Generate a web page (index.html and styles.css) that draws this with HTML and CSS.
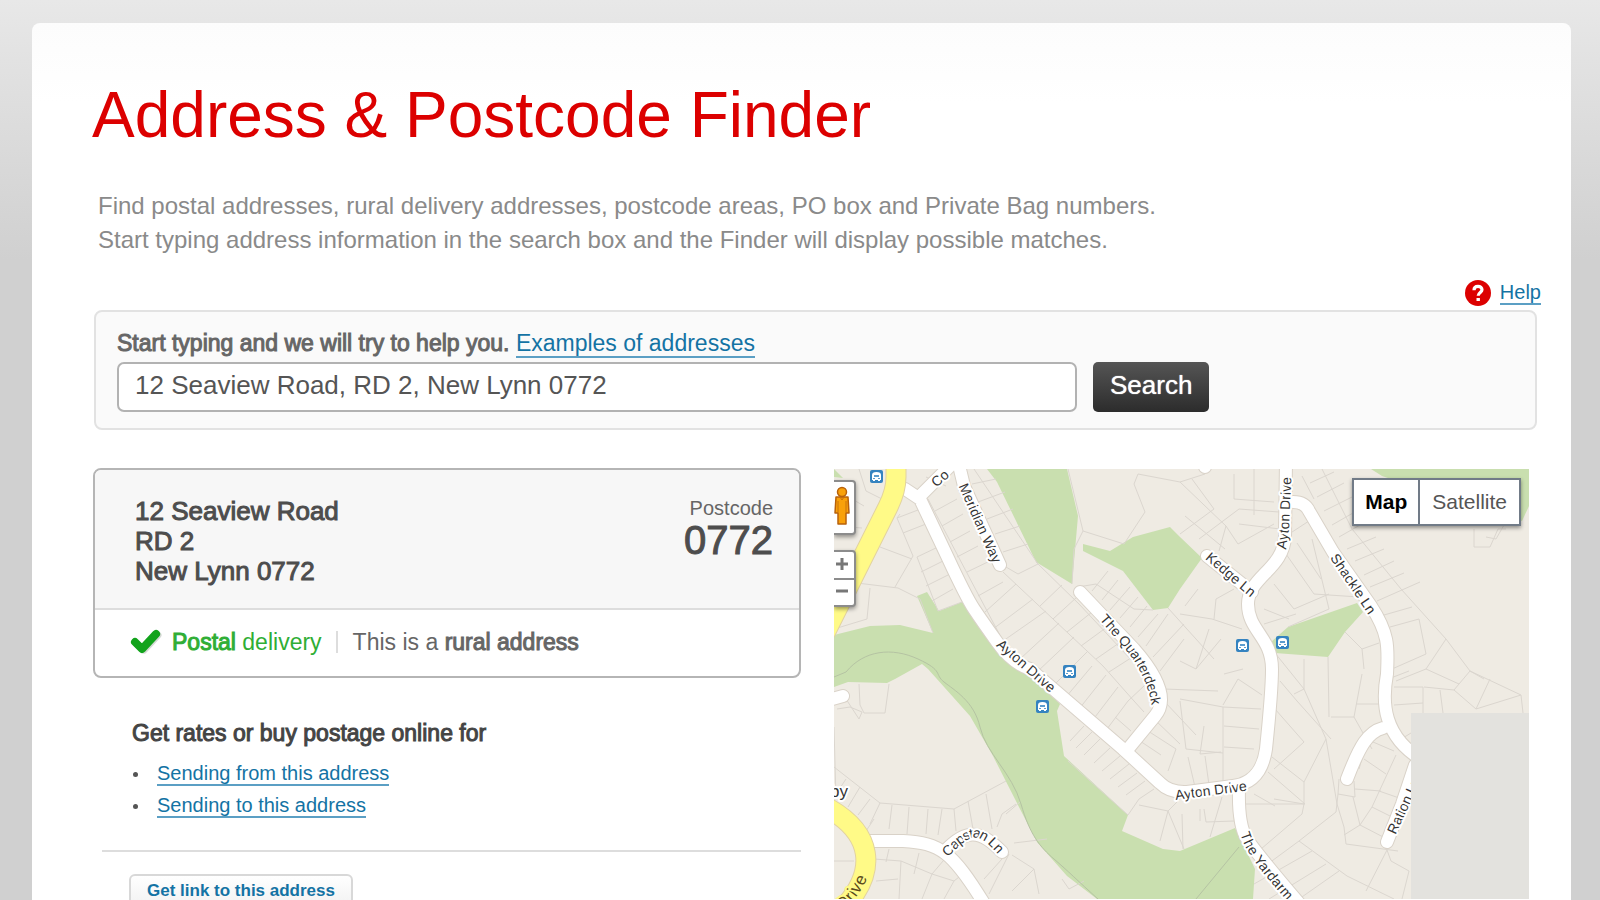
FILE: index.html
```html
<!DOCTYPE html>
<html lang="en">
<head>
    <meta charset="UTF-8">
    <meta name="viewport" content="width=device-width, initial-scale=1.0">
    <title>Address &amp; Postcode Finder</title>
    <link rel="stylesheet" href="styles.css">
</head>
<body>
    <main class="page">
        <h1>Address &amp; Postcode Finder</h1>
        <p class="intro">Find postal addresses, rural delivery addresses, postcode areas, PO box and Private Bag numbers.<br>
        Start typing address information in the search box and the Finder will display possible matches.</p>

        <div class="help">
            <svg width="26" height="26" viewBox="0 0 26 26" aria-hidden="true">
                <circle cx="13" cy="13" r="13" fill="#dc0000"/>
                <path d="M9 10.200C9 7.600 10.700 6.300 13 6.300S17 7.700 17 9.800C17 12.400 13.200 12.600 13.200 15.800" fill="none" stroke="#fff" stroke-width="3.200"/>
                <rect x="11.500" y="18" width="3.400" height="3" fill="#fff"/>
            </svg>
            <a href="#help">Help</a>
        </div>

        <form class="search-box">
            <div class="search-label">
                <label for="address" class="strong">Start typing and we will try to help you.</label>
                <a href="#examples">Examples of addresses</a>
            </div>
            <div class="search-row">
                <input type="text" id="address" name="address" value="12 Seaview Road, RD 2, New Lynn 0772">
                <button type="button" class="search-button">Search</button>
            </div>
        </form>

        <div class="results">
            <div class="details">
                <div class="card">
                    <div class="card-top">
                        <div class="address strong">12 Seaview Road<br>RD 2<br>New Lynn 0772</div>
                        <div class="postcode">
                            <span>Postcode</span>
                            <b class="strong">0772</b>
                        </div>
                    </div>
                    <div class="card-bottom">
                        <svg width="32" height="26" viewBox="0 0 32 26" aria-hidden="true">
                            <path d="M6 14L14 21L28 6" fill="none" stroke="#d5d9d5" stroke-width="7" stroke-linejoin="round" stroke-linecap="round"/>
                            <path d="M5 13L12 20L26 5" fill="none" stroke="#12a31c" stroke-width="8" stroke-linejoin="round" stroke-linecap="round"/>
                        </svg>
                        <span class="postal"><span class="strong">Postal</span> delivery</span>
                        <span class="rural">This is a <span class="strong">rural address</span></span>
                    </div>
                </div>

                <div class="postage">
                    <h2 class="strong">Get rates or buy postage online for</h2>
                    <ul>
                        <li><a href="#from">Sending from this address</a></li>
                        <li><a href="#to">Sending to this address</a></li>
                    </ul>
                </div>
                <hr>
                <button type="button" class="link-button">Get link to this address</button>
            </div>

            <div class="map">
                <svg class="map-drawing" viewBox="0 0 695 430" preserveAspectRatio="xMinYMin slice" role="img" aria-label="Street map">
                    <defs>
                        <path id="meridian" d="M129 15L165 96"/>
                        <path id="ayton-west" d="M165 173L225 225"/>
                        <path id="quarterdeck" d="M269 147C285 166 300 180 309 197C316 210 321 222 324 244"/>
                        <path id="ayton-north" d="M447 80L450 60L453 -5"/>
                        <path id="kedge" d="M374 86L426 130"/>
                        <path id="shackle" d="M500 86L546 154"/>
                        <path id="ayton-south" d="M341 326L417 316"/>
                        <path id="yardarm" d="M411 363C417 382 427 396 477 451"/>
                        <path id="ration" d="M557 364L589 294"/>
                        <path id="capstan" d="M110 385C121 374 128 366 138 364C150 362 160 372 176 392"/>
                        <path id="drive" d="M5 438C16 430 26 417 33 396"/>
                        <path id="co" d="M99 15L127 -9"/>
                        <g id="bus">
                            <rect width="13" height="13" rx="2" fill="#3583c0"/>
                            <path d="M2 10V5Q2 2 6.500 2T11 5V10H10V11H8V10H5V11H3V10Z" fill="#fff"/>
                            <path d="M4 5H9V7H4ZM3 8H5V9H3ZM8 8H10V9H8Z" fill="#5d9dce"/>
                        </g>
                    </defs>

                    <rect width="695" height="430" fill="#efebe3"/>

                    <!-- parks -->
                    <g fill="#c9dfaf">
                        <path d="M0 0L9 9L0 8Z"/>
                        <path d="M153 0H233L244 47L238 115L202 93L163 13Z"/>
                        <path d="M249 75L276 82L299 68L336 58L346 68L368 89L346 120L334 139L319 141L289 102L249 82Z"/>
                        <path d="M537 0H695V37L688 52L660 45L548 7Z"/>
                        <path d="M523 134L529 143L511 163L494 188L441 184L437 173L454 158Z"/>
                        <path d="M83 127L93 123L105 142L128 133L153 168L226 235L223 242L230 287L294 346L288 362L329 380L346 382L401 359L409 375L421 400L419 430H263L233 407L203 373L186 340L159 287L136 247L94 200L88 195L61 210L53 214L14 213L0 218V166L36 157L66 156L99 164Z"/>
                    </g>

                    <!-- property boundaries -->
                    <g class="parcels">
                        <path d="M6 23L30 37M0 57L28 59M25 0L32 22L48 30M66 45L63 49L79 87L61 118M63 49L84 41M69 64L92 55M83 88L104 78M46 78L78 90M83 88L104 142L128 133M87 103L109 92M92 117L116 105M98 132L119 120M23 114L64 119L86 130L99 164M36 119L33 150L0 160"/>
                        <path d="M94 30L143 123L169 172M101 42L123 30M108 57L129 45M116 73L136 62M123 88L144 77M133 103L160 90M92 8L112 17M140 0L204 95L184 105L172 98M138 15L162 10M144 33L171 23M153 50L179 40M161 65L186 57M169 83L194 75"/>
                        <path d="M169 103L269 197L300 232L310 243M144 127L169 113M151 143L182 115M159 160L199 130M169 172L212 142M186 190L225 154M203 203L240 168M219 217L254 182M202 93L245 135L315 210M206 137L228 116M219 150L243 128M233 163L258 143M247 177L273 158M262 190L288 172M275 203L300 187M232 228L258 197M245 240L272 206M258 252L284 218M270 264L294 232M281 248L297 262M294 232L311 216"/>
                        <path d="M234 0L249 62L240 80L238 115M249 62L290 75L311 43L300 15L304 5L346 13L371 5M244 118L262 115L300 140L319 141M258 122L274 102M268 131L284 111M276 141L296 118M286 149L304 128M296 158L313 137M304 168L324 145M312 177L334 145M319 188L350 155M334 139L380 190M326 202L350 170M330 220L384 222M330 232L362 266M320 250L346 275M314 262L342 280L334 302M306 272L327 286"/>
                        <path d="M234 292L294 346M236 272L250 257M250 286L266 270M242 279L258 263M260 294L276 279M268 302L286 287M276 310L295 295M284 318L303 304M292 326L311 312M294 346L305 330L320 320M305 336L334 342L348 328M334 342L326 372M334 342L350 380"/>
                        <path d="M346 13L392 57L404 75L440 55M358 10L380 40L346 65M400 5V30L440 33M420 0V46M351 47L391 80M392 57L385 82M365 70L405 40L445 43M405 55L446 60M346 145L378 150L408 160M351 137L364 120M380 150L382 130L400 120M346 192L362 200L375 160M387 170L362 200M390 205L409 200M346 230L389 238L427 240M389 238L389 316M346 232L352 280L389 284M370 257L366 285L387 283M354 288L361 318M371 287L375 316M389 236L404 210L428 226M390 257L425 260M390 278L420 280M348 345L349 380M366 340V352M370 340L372 353L400 352M388 328L376 368"/>
                        <path d="M452 85L480 125L525 128M463 74L487 110M455 65L478 50M478 70L495 140L454 158M440 115L460 140L495 125M430 140L455 150M430 155L462 145M488 0L518 60L567 120L612 170L636 202L650 210M468 7L480 30M476 14L500 3M483 28L510 14M490 42L518 28M498 56L526 40M505 68L533 52M513 80L542 68M521 92L550 80M530 106L560 92M536 118L570 104M543 132L586 113M550 146L578 138M556 158L585 150L592 185L558 200M511 163L528 180L530 200M494 188L495 248M470 190V220L460 225M441 184L470 220L492 270M528 180L545 174M612 170L592 200L562 212M592 200L625 215L636 202M560 218L589 218V244M560 236L589 234M625 215L620 221L590 218M606 221L609 244M636 202L687 226L689 244M620 221L642 240L687 226M656 210L642 240"/>
                        <path d="M446 212L463 232L497 270M441 240L470 273L440 300M492 270L470 313V335L440 330M438 288L470 313M434 303L471 335H412M420 325L441 337M427 380L468 345L470 335M492 270L503 335L510 358L512 375L564 382M497 248H520L538 280M520 248L528 205M522 235L548 235M505 310L504 325L521 328L520 312M521 320L547 322M530 290L552 305M532 270L560 282M535 265L525 300M562 286L538 338L526 356M504 325L502 343L465 372L427 400M465 372L513 407L560 430M510 366L526 356L553 370M526 356L519 328M538 338L556 347M545 322L568 330M420 415L478 382M435 430L492 395M465 430L505 402M553 381L557 392L575 402L568 430M553 381L532 422M564 272L577 264M549 212L575 202"/>
                        <path d="M12 230L25 250L28 243L16 238L3 240M25 215L26 236L30 244H51L55 215M0 258L2 330M0 298L46 334L120 340L172 312M12 310L4 322M26 318L14 338M36 330L24 346M46 334L36 355M58 336L55 360M75 338L73 365M94 340L92 365M108 340L104 366M134 332L139 360M152 325L158 360M120 340L122 362M172 345L186 333M163 358L168 345L182 335M30 365L40 350M0 392H20M40 390L67 392L65 430M42 412L64 410M55 380L52 393M67 392L98 405L115 385M85 384L80 405M98 405L120 412L135 400M98 405L88 430M120 412L110 430M180 374L213 370M178 386L200 400L205 425M168 390L150 410M175 385L155 425M200 400L178 422M228 410L235 420L250 412"/>
                        <path d="M640 60V78H656L664 60L672 60M652 68L662 70L670 56"/>
                    </g>
                    <g class="paths">
                        <path d="M0 208L12 203C30 181 58 178 84 190S100 205 110 213S140 232 146 258S178 304 187 335S206 378 220 390S244 412 264 430"/>
                        <path d="M362 430L405 378"/>
                    </g>

                    <!-- streets: casing first, then fill -->
                    <g class="road-edge">
                        <path d="M71 20L86 30L113 87Q132 128 140 140T163 173T196 200L289 280L326 314Q336 324 353 323L399 317C424 314 430 294 432 280Q438 222 438 200C438 168 414 162 414 135C414 108 450 100 451 67L452 -8"/>
                        <path d="M86 27L119 -6M124 -8L130 17L166 96M246 123L300 180C330 214 332 234 321 247L294 280M373 87L418 123"/>
                        <path d="M459 33Q471 33 475 42L499 83L537 137C556 166 554 180 553 205C548 232 548 268 590 292M549 259C534 263 526 276 513 310M581 296L568 335L553 373M405 320Q404 356 413 370T470 440"/>
                        <path d="M36 372H69C106 374 118 382 151 436M111 382C132 360 146 360 168 383M-5 231L9 227M371 -5V-2"/>
                    </g>
                    <g class="road">
                        <path d="M71 20L86 30L113 87Q132 128 140 140T163 173T196 200L289 280L326 314Q336 324 353 323L399 317C424 314 430 294 432 280Q438 222 438 200C438 168 414 162 414 135C414 108 450 100 451 67L452 -8"/>
                        <path d="M86 27L119 -6M124 -8L130 17L166 96M246 123L300 180C330 214 332 234 321 247L294 280M373 87L418 123"/>
                        <path d="M459 33Q471 33 475 42L499 83L537 137C556 166 554 180 553 205C548 232 548 268 590 292M549 259C534 263 526 276 513 310M581 296L568 335L553 373M405 320Q404 356 413 370T470 440"/>
                        <path d="M36 372H69C106 374 118 382 151 436M111 382C132 360 146 360 168 383M-5 231L9 227M371 -5V-2"/>
                    </g>
                    <path class="main-road-edge" d="M62 -8V8Q62 22 54 38L-8 162M-8 338C40 364 42 402 12 436"/>
                    <path class="main-road" d="M62 -8V8Q62 22 54 38L-8 162M-8 338C40 364 42 402 12 436"/>

                    <g class="street-name">
                        <text dy="5"><textPath href="#meridian">Meridian Way</textPath></text>
                        <text dy="5"><textPath href="#ayton-west">Ayton Drive</textPath></text>
                        <text dy="5"><textPath href="#quarterdeck">The Quarterdeck</textPath></text>
                        <text dy="5"><textPath href="#ayton-north">Ayton Drive</textPath></text>
                        <text dy="5"><textPath href="#kedge">Kedge Ln</textPath></text>
                        <text dy="5"><textPath href="#shackle">Shackle Ln</textPath></text>
                        <text dy="5"><textPath href="#ayton-south">Ayton Drive</textPath></text>
                        <text dy="5"><textPath href="#yardarm">The Yardarm</textPath></text>
                        <text dy="5"><textPath href="#ration">Ration Ln</textPath></text>
                        <text dy="5"><textPath href="#capstan">Capstan Ln</textPath></text>
                        <text dy="5"><textPath href="#co">Co</textPath></text>
                        <text class="area-name" x="-4" y="328">by</text>
                        <text class="main-name" dy="5"><textPath href="#drive">Drive</textPath></text>
                    </g>

                    <use href="#bus" x="36" y="1"/>
                    <use href="#bus" x="229" y="196"/>
                    <use href="#bus" x="202" y="231"/>
                    <use href="#bus" x="402" y="170"/>
                    <use href="#bus" x="442" y="167"/>
                    <rect x="577" y="244" width="118" height="186" fill="#e3e2de"/>
                </svg>

                <button type="button" class="pegman" aria-label="Street view">
                    <svg width="16" height="40" viewBox="0 0 16 40" aria-hidden="true">
                        <path d="M2 11H14L15 27H12V38H4V27H1Z" fill="#f9a10a" stroke="#b8610b" stroke-width="1.500" stroke-linejoin="round"/>
                        <circle cx="8" cy="6" r="4.500" fill="#f9a10a" stroke="#b8610b" stroke-width="1.500"/>
                        <path d="M6 11L8 14L10 11M4 15V26M12 15V26" fill="none" stroke="#c8700c"/>
                    </svg>
                </button>
                <div class="zoom">
                    <button type="button" aria-label="Zoom in"><svg width="14" height="14" viewBox="0 0 14 14"><path d="M7 1V13M1 7H13" stroke="#777" stroke-width="3"/></svg></button>
                    <button type="button" aria-label="Zoom out"><svg width="14" height="14" viewBox="0 0 14 14"><path d="M1 7H13" stroke="#777" stroke-width="3"/></svg></button>
                </div>
                <div class="map-type">
                    <button type="button" class="active">Map</button>
                    <button type="button">Satellite</button>
                </div>
            </div>
        </div>
    </main>
</body>
</html>
```

FILE: styles.css
```css
* {
    box-sizing: border-box;
}
body {
    margin: 0;
    padding: 23px 29px 0 32px;
    font-family: "Liberation Sans", Arial, sans-serif;
    font-size: 23px;
    color: #666;
    background: #d0d0d0 linear-gradient(#e8e8e8, #e2e2e2 60px, #d0d0d0 260px) no-repeat;
}
button, input {
    font-family: inherit;
}
a {
    color: #1473a4;
    text-decoration: none;
    border-bottom: 2px solid #5b9fc4;
}
.strong {
    font-weight: normal;
    -webkit-text-stroke: 1px currentColor;
}
.page {
    padding: 56px 34px 40px 60px;
    border-radius: 8px 8px 0 0;
    background: linear-gradient(#fcfcfc, #fff 80px);
}
h1 {
    margin: 0;
    font-size: 64px;
    font-weight: normal;
    line-height: 72px;
    color: #dc0000;
}
.intro {
    margin: 38px 0 0 6px;
    font-size: 24px;
    line-height: 34px;
    color: #8a8a8a;
}

/* help link */
.help {
    display: flex;
    justify-content: flex-end;
    align-items: center;
    gap: 9px;
    height: 26px;
    margin: 23px -4px 4px 0;
    font-size: 20px;
}
.help a {
    line-height: 22px;
}

/* search */
.search-box {
    margin-left: 2px;
    padding: 16px 21px;
    border: 2px solid #e2e2e2;
    border-radius: 8px;
    background: #fafafa;
}
.search-label {
    line-height: 30px;
    margin-bottom: 4px;
}
.search-row {
    display: flex;
    gap: 16px;
}
.search-row input {
    width: 100%;
    max-width: 960px;
    height: 50px;
    padding: 0 16px 4px;
    border: 2px solid #b2b2b2;
    border-radius: 7px;
    background: #fff;
    font-size: 26px;
    color: #555;
}
.search-button {
    height: 50px;
    padding: 0 17px 3px;
    border: 0;
    border-radius: 5px;
    background: linear-gradient(#555, #2c2c2c);
    font-size: 26px;
    color: #fff;
    text-shadow: 0 0 1px #fff;
}

/* result columns */
.results {
    display: grid;
    grid-template-columns: 708fr 695fr;
    gap: 33px;
    margin: 38px 8px 0 1px;
}
.card {
    border: 2px solid #b5b5b5;
    border-radius: 8px;
    background: #fff;
}
.card-top {
    display: flex;
    justify-content: space-between;
    padding: 26px 26px 20px 40px;
    border-bottom: 2px solid #ddd;
    border-radius: 6px 6px 0 0;
    background: #f7f7f7;
    color: #4d4d4d;
}
.address {
    font-size: 26px;
    line-height: 30px;
    padding-bottom: 2px;
}
.postcode {
    display: flex;
    flex-direction: column;
    align-items: flex-end;
    font-size: 20px;
    line-height: 24px;
    color: #666;
}
.postcode b {
    font-size: 40px;
    line-height: 40px;
    color: #4d4d4d;
}
.card-bottom {
    display: flex;
    align-items: center;
    height: 66px;
    padding: 0 0 2px 35px;
}
.postal {
    margin: 0 14px 0 10px;
    color: #2fae35;
}
.rural {
    padding-left: 15px;
    border-left: 2px solid #ddd;
    line-height: 22px;
}

/* postage links */
.postage {
    padding: 40px 38px 28px 39px;
}
h2 {
    margin: 0;
    font-size: 23px;
    line-height: 30px;
    color: #444;
}
ul {
    margin: 10px 0 0;
    padding: 0;
    list-style: none;
    font-size: 20px;
    line-height: 32px;
}
li {
    display: flex;
    align-items: center;
    height: 32px;
}
li a {
    line-height: 22px;
}
li::before {
    content: "";
    width: 5px;
    height: 5px;
    margin: 0 19px 0 1px;
    border-radius: 50%;
    background: #555;
}
hr {
    margin: 0 0 0 9px;
    border: 0;
    border-top: 2px solid #ddd;
}
.link-button {
    height: 38px;
    margin: 22px 0 0 36px;
    padding: 0 16px 4px;
    border: 2px solid #d8d8d8;
    border-radius: 6px;
    background: linear-gradient(#fff, #f0f0f0);
    font-size: 17px;
    font-weight: bold;
    color: #1473a4;
}

/* map */
.map {
    position: relative;
    margin-top: 1px;
    overflow: hidden;
}
.map-drawing {
    display: block;
    width: 100%;
}
.parcels {
    fill: none;
    stroke: #dbd6cf;
    stroke-width: 1;
}
.paths {
    fill: none;
    stroke: #b5c3a3;
    stroke-width: 1;
}
.road, .road-edge, .main-road, .main-road-edge {
    fill: none;
    stroke: #fff;
    stroke-width: 12;
    stroke-linecap: round;
    stroke-linejoin: round;
}
.road-edge {
    stroke: #d9d2c8;
    stroke-width: 14;
}
.main-road {
    stroke: #fffa87;
    stroke-width: 19;
}
.main-road-edge {
    stroke: #e2d3a0;
    stroke-width: 21;
}
.street-name {
    font-size: 14px;
    fill: #333;
    stroke: #fff;
    stroke-width: 4;
    stroke-linejoin: round;
    paint-order: stroke;
}
.area-name {
    font-size: 17px;
}
.main-name {
    font-size: 17px;
    stroke: #fffa87;
    fill: #5a4a1c;
}
.pegman, .zoom {
    position: absolute;
    left: 0;
    width: 22px;
    border: 2px solid #8c8c8c;
    border-left: 0;
    border-radius: 0 4px 4px 0;
    background: #fff;
    box-shadow: 0 2px 4px rgba(0, 0, 0, 0.4);
}
.pegman {
    top: 11px;
    height: 55px;
    padding: 0 4px 0 0;
}
.zoom {
    top: 81px;
}
.zoom button {
    display: block;
    width: 20px;
    height: 26px;
    padding: 0 4px 0 0;
    border: 0;
    background: none;
}
.zoom button + button {
    height: 27px;
    border-top: 2px solid #8c8c8c;
}
.map-type {
    position: absolute;
    top: 9px;
    right: 8px;
    display: flex;
    border: 2px solid #717b87;
    background: #fff;
    box-shadow: 0 2px 4px rgba(0, 0, 0, 0.4);
}
.map-type button {
    height: 44px;
    padding: 0 12px;
    border: 0;
    background: none;
    font-size: 21px;
    color: #555;
}
.map-type button + button {
    border-left: 2px solid #717b87;
}
.map-type .active {
    padding: 0 11px;
    font-weight: bold;
    color: #000;
}
```
